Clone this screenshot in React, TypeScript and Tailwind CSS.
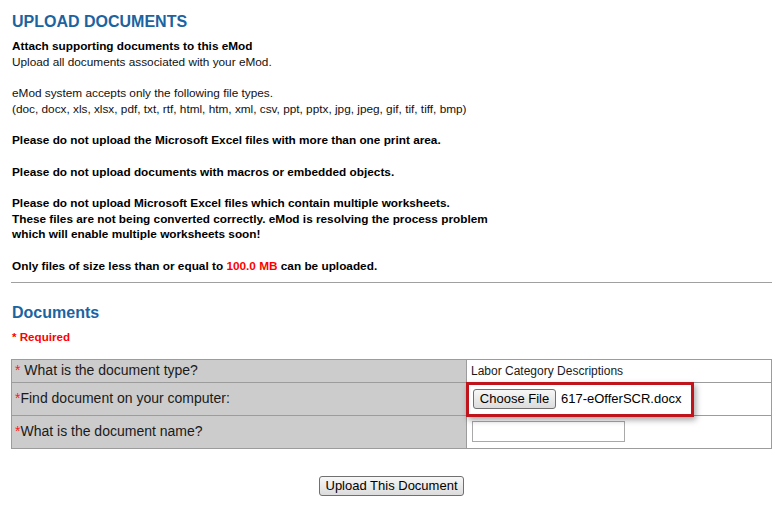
import React from "react";

const font = { fontFamily: '"Liberation Sans", Arial, sans-serif' };

function Star({ space }: { space?: boolean }) {
  return (
    <span className="text-[#ff1a1a]">
      *{space ? "\u00a0" : ""}
    </span>
  );
}

export default function App() {
  return (
    <div
      className="w-[784px] h-[514px] bg-white text-[#111] pl-[11px] pt-[12px]"
      style={font}
    >
      <h1 className="text-[16px] leading-[20px] font-bold text-[#1b63a1] pl-[1px]">
        UPLOAD DOCUMENTS
      </h1>

      <div className="mt-[7px] pl-[1px] text-[11.8px] leading-[15.5px] flex flex-col gap-[16px]">
        <div>
          <div className="font-bold text-black">Attach supporting documents to this eMod</div>
          <div>Upload all documents associated with your eMod.</div>
        </div>
        <div>
          <div>eMod system accepts only the following file types.</div>
          <div>
            (doc, docx, xls, xlsx, pdf, txt, rtf, html, htm, xml, csv, ppt, pptx, jpg, jpeg, gif, tif, tiff, bmp)
          </div>
        </div>
        <div className="font-bold text-black">
          Please do not upload the Microsoft Excel files with more than one print area.
        </div>
        <div className="font-bold text-black">
          Please do not upload documents with macros or embedded objects.
        </div>
        <div className="font-bold text-black">
          <div>Please do not upload Microsoft Excel files which contain multiple worksheets.</div>
          <div>These files are not being converted correctly. eMod is resolving the process problem</div>
          <div>which will enable multiple worksheets soon!</div>
        </div>
        <div className="font-bold text-black">
          Only files of size less than or equal to{" "}
          <span className="text-[#ff0000]">100.0 MB</span> can be uploaded.
        </div>
      </div>

      <div className="mt-[8px] w-[761px] h-px bg-[#a0a0a0]" />

      <h2 className="mt-[20px] pl-[1px] text-[16px] leading-[20px] font-bold text-[#1b63a1]">
        Documents
      </h2>
      <div className="mt-[6px] pl-[1px] text-[11.6px] leading-[15.5px] font-bold text-[#ff0000]">
        * Required
      </div>

      <div className="relative mt-[14px] w-[761px] border border-[#9c9c9c] text-[14px]">
        <div className="flex h-[23px] border-b border-[#9c9c9c]">
          <div className="w-[455px] border-r border-[#9c9c9c] bg-[#cccccc] pl-[3px] flex items-center text-[#1a1a1a]">
            <Star space />
            <span>What is the document type?</span>
          </div>
          <div className="flex-1 flex items-center pl-[4px] text-[12px] text-[#1a1a1a]">
            Labor Category Descriptions
          </div>
        </div>
        <div className="flex h-[33px] border-b border-[#9c9c9c]">
          <div className="w-[455px] border-r border-[#9c9c9c] bg-[#cccccc] pl-[3px] flex items-center text-[#1a1a1a]">
            <Star />
            <span>Find document on your computer:</span>
          </div>
          <div className="flex-1 flex items-center pl-[6px]">
            <button
              type="button"
              className="w-[83px] h-[20px] border border-[#707070] rounded-[3px] bg-gradient-to-b from-[#f7f7f7] to-[#dcdcdc] text-[13px] leading-[18px] text-black"
            >
              Choose File
            </button>
            <span className="ml-[5px] text-[13px] text-black">617-eOfferSCR.docx</span>
          </div>
        </div>
        <div className="flex h-[32px]">
          <div className="w-[455px] border-r border-[#9c9c9c] bg-[#cccccc] pl-[3px] flex items-center text-[#1a1a1a]">
            <Star />
            <span>What is the document name?</span>
          </div>
          <div className="flex-1 flex items-center pl-[5px]">
            <input
              type="text"
              className="w-[153px] h-[21px] border border-[#a9a9a9] bg-white outline-none"
            />
          </div>
        </div>

        <div className="absolute left-[454px] top-[22px] w-[228px] h-[35px] border-[3px] border-[#c0141c] shadow-[2px_3px_6px_rgba(0,0,0,0.35)] pointer-events-none" />
      </div>

      <div className="w-[761px] flex justify-center mt-[27px]">
        <button
          type="button"
          className="w-[145px] h-[20px] border border-[#707070] rounded-[3px] bg-gradient-to-b from-[#f7f7f7] to-[#dcdcdc] text-[13px] leading-[18px] text-black"
        >
          Upload This Document
        </button>
      </div>
    </div>
  );
}
